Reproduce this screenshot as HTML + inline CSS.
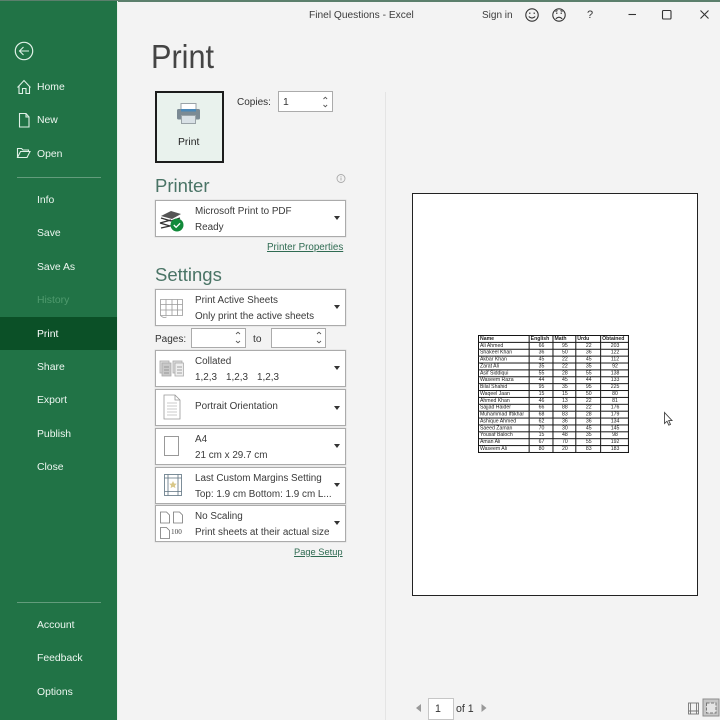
<!DOCTYPE html>
<html><head><meta charset="utf-8"><title>Print</title>
<style>
html,body{margin:0;padding:0;width:720px;height:720px;overflow:hidden;background:#f3f3f3}
body{position:relative;font-family:"Liberation Sans",sans-serif;color:#333}
.a{position:absolute;white-space:nowrap}
.nav{position:absolute;left:37px;font-size:10.4px;color:#eef7f1;white-space:nowrap;line-height:14px}
.box{position:absolute;left:155px;width:188.5px;background:#fff;border:1px solid #ababab;box-shadow:0 0 0 .5px #ddd}
.l1,.l2{position:absolute;left:39px;font-size:9.9px;color:#3a3a3a;white-space:nowrap;line-height:13px}
.arr{position:absolute;left:178px;width:0;height:0;border-left:3.5px solid transparent;border-right:3.5px solid transparent;border-top:4px solid #333}
.h{position:absolute;left:155px;font-size:18.5px;color:#4a7466;line-height:22px}
.lnk{position:absolute;color:#2f6b52;text-decoration:underline;white-space:nowrap;line-height:13px}
svg{position:absolute;overflow:visible}
table{position:absolute;left:478px;top:335px;width:151px;height:118px;border-collapse:collapse;table-layout:fixed;font-size:5.2px;color:#222;background:#fff;transform:scale(.993,.983);transform-origin:0 0}
td{border:1px solid #111;padding:0 0 0 1px;line-height:5px;height:6px;text-align:center;overflow:hidden;white-space:nowrap}
td:first-child{text-align:left}
tr:first-child td{font-weight:bold;text-align:left}
</style></head><body>
<div class="a" style="left:0;top:0;width:720px;height:2px;background:#5b7f6c"></div>
<div class="a" style="left:0;top:1px;width:117px;height:719px;background:#217346"></div>
<div class="a" style="left:0;top:317px;width:117px;height:33px;background:#0b5027"></div>
<div class="a" style="left:117px;top:1px;width:1px;height:719px;background:#e8eeea"></div>

<svg style="left:0;top:0" width="117" height="180" fill="none" stroke="#dff0e6" stroke-width="1.1">
<circle cx="24" cy="51" r="8.7" stroke-width="1.2"/>
<path d="M29 51H19.5M23.5 47l-4 4 4 4"/>
<path d="M17.500 87.500l6.500-7 6.500 7M19 86v7.500h3.500v-5h3.500v5h3.500v-7.500"/>
<path d="M19.500 113.500h6.500l3 3.500v10h-9.500zM26 113.500v3.500h3"/>
<path d="M17.500 157.500v-9h4l1.500 1.500h5.500v2M17.500 157.500l3-6h9.500l-3 6z"/>
</svg>
<div class="a" style="left:17px;top:176.500px;width:84px;height:1px;background:#639c7c"></div>
<div class="a" style="left:17px;top:601.500px;width:84px;height:1px;background:#639c7c"></div>
<div class="nav" style="top:80.500px">Home</div>
<div class="nav" style="top:113.500px">New</div>
<div class="nav" style="top:147.500px">Open</div>
<div class="nav" style="top:194px">Info</div>
<div class="nav" style="top:227px">Save</div>
<div class="nav" style="top:261px">Save As</div>
<div class="nav" style="top:294px;color:#4f9a6e">History</div>
<div class="nav" style="top:327.500px;color:#fff">Print</div>
<div class="nav" style="top:361px">Share</div>
<div class="nav" style="top:394px">Export</div>
<div class="nav" style="top:428px">Publish</div>
<div class="nav" style="top:461px">Close</div>
<div class="nav" style="top:619px">Account</div>
<div class="nav" style="top:652px">Feedback</div>
<div class="nav" style="top:686px">Options</div>

<div class="a" style="left:309px;top:9px;font-size:10.2px;color:#3c3c3c;line-height:13px">Finel Questions - Excel</div>
<div class="a" style="left:482px;top:9px;font-size:10px;color:#3c3c3c;line-height:13px">Sign in</div>
<svg style="left:0;top:0" width="720" height="30" fill="none" stroke="#333" stroke-width="1.100">
<circle cx="532" cy="15" r="6.200"/><path d="M528.800 16.500q3.200 3.200 6.400 0"/><path d="M529.800 12.500v1.500M534.200 12.500v1.500"/>
<circle cx="559" cy="15" r="6.200"/><path d="M555.800 18.800q3.200-3.200 6.400 0"/><path d="M556.800 12.500v1.500M561.200 12.500v1.500M555.500 11.500l2-1M562.500 11.500l-2-1"/>
<path d="M628.500 14.500h7.500"/>
<rect x="662.500" y="10.500" width="8.500" height="8.500" rx="1"/>
<path d="M700.500 10.500l8 8M708.500 10.500l-8 8"/>
</svg>
<div class="a" style="left:587px;top:8px;font-size:11px;color:#333;line-height:14px">?</div>

<div class="a" style="left:151px;top:38px;font-size:33.5px;color:#444;line-height:40px;transform:scaleX(.915);transform-origin:0 0">Print</div>

<div class="a" style="left:155px;top:91px;width:64.500px;height:68px;background:#e9f2ed;border:2px solid #1c1c1c"></div>
<svg style="left:0;top:0" width="240" height="130">
<rect x="181" y="103.500" width="15" height="8" fill="#fff" stroke="#9aa3a8"/>
<rect x="177" y="109" width="23" height="10.500" rx="1.500" fill="#7b8a94"/>
<rect x="181" y="109" width="15" height="2.500" fill="#4a88b8"/>
<rect x="181.500" y="115.500" width="14" height="8" fill="#d9e1e6" stroke="#9aa3a8"/>
</svg>
<div class="a" style="left:178px;top:136px;font-size:10.400px;color:#222;line-height:13px">Print</div>

<div class="a" style="left:237px;top:96px;font-size:10px;color:#333;line-height:13px">Copies:</div>
<div class="a" style="left:278px;top:91px;width:53px;height:18.500px;background:#fff;border:1px solid #ababab"></div>
<div class="a" style="left:283px;top:96px;font-size:10.400px;color:#333;line-height:13px">1</div>
<svg style="left:0;top:0" width="340" height="120" fill="none" stroke="#555" stroke-width=".9">
<path d="M323.500 99l1.800-1.800 1.800 1.800M323.500 105l1.800 1.800 1.800-1.800"/>
<circle cx="341" cy="178.500" r="4" stroke="#aaa"/><path d="M341 177.500v3M341 176v.8" stroke="#aaa"/>
</svg>

<div class="h" style="top:175px">Printer</div>
<div class="box" style="top:200px;height:35px">
<div class="l1" style="top:4px">Microsoft Print to PDF</div><div class="l2" style="top:20px">Ready</div><div class="arr" style="top:15px"></div>
<svg style="left:3px;top:8px" width="30" height="26">
<path d="M2 7l10-5 10 3-9 5z" fill="#555"/><path d="M2 9l10 3 9-3M1 14l11-3M1 14l10 3 4-1M2 19l9-2" stroke="#333" stroke-width="1.300" fill="none"/>
<circle cx="18" cy="16" r="6.500" fill="#128a3a"/><path d="M14.800 16l2.300 2.300 4-4" stroke="#fff" stroke-width="1.300" fill="none"/>
</svg>
</div>
<div class="lnk" style="left:267px;top:240.500px;font-size:9.800px">Printer Properties</div>

<div class="h" style="top:264px">Settings</div>
<div class="box" style="top:289px;height:35px">
<div class="l1" style="top:3.500px">Print Active Sheets</div><div class="l2" style="top:20px">Only print the active sheets</div><div class="arr" style="top:15px"></div>
<svg style="left:3px;top:8px" width="26" height="22" fill="#fff" stroke="#999" stroke-width=".8">
<path d="M1.500 1.500h22v16h-22zM1.500 6.500h22M1.500 12h22M7 1.500v16M13 1.500v16M18.500 1.500v16"/><path d="M1.500 17.500q3 3 6 1.500" fill="none"/>
</svg>
</div>
<div class="a" style="left:155px;top:332.500px;font-size:10px;color:#333;line-height:13px">Pages:</div>
<div class="a" style="left:191px;top:328px;width:53px;height:18px;background:#fff;border:1px solid #ababab"></div>
<div class="a" style="left:271px;top:328px;width:53px;height:18px;background:#fff;border:1px solid #ababab"></div>
<div class="a" style="left:253px;top:332.500px;font-size:10.200px;color:#333;line-height:13px">to</div>
<svg style="left:0;top:0" width="340" height="350" fill="none" stroke="#555" stroke-width=".9">
<path d="M236 334l2-1.800 2 1.800M236 341l2 1.800 2-1.800M317 334l2-1.800 2 1.800M317 341l2 1.800 2-1.800"/>
</svg>

<div class="box" style="top:350px;height:35px">
<div class="l1" style="top:4px">Collated</div><div class="l2" style="top:20px">1,2,3</div><div class="l2" style="top:20px;left:70px">1,2,3</div><div class="l2" style="top:20px;left:101px">1,2,3</div><div class="arr" style="top:15px"></div>
<svg style="left:3px;top:9px" width="26" height="20" fill="#ddd" stroke="#aaa" stroke-width=".8">
<rect x="1" y="1" width="9" height="12"/><rect x="3" y="3" width="9" height="13" fill="#c9c9c9"/><rect x="14" y="1" width="9" height="12"/><rect x="16" y="3" width="8.500" height="13" fill="#eee"/>
<path d="M5 7h5M5 10h5M5 13h5M18 7h5M18 10h5M18 13h5" stroke="#888"/>
</svg>
</div>
<div class="box" style="top:389px;height:35px">
<div class="l1" style="top:10px">Portrait Orientation</div><div class="arr" style="top:16px"></div>
<svg style="left:7px;top:4px" width="20" height="26" fill="#fff" stroke="#999" stroke-width=".8">
<path d="M1 1h11l5 5v19h-16zM12 1v5h5"/><path d="M4 9h10M4 12h10M4 15h10M4 18h10M4 21h10" stroke="#bbb"/>
</svg>
</div>
<div class="box" style="top:428px;height:35px">
<div class="l1" style="top:4px">A4</div><div class="l2" style="top:20px">21 cm x 29.7 cm</div><div class="arr" style="top:15px"></div>
<svg style="left:8px;top:7px" width="18" height="22"><rect x=".5" y=".5" width="14" height="19" fill="#fff" stroke="#999"/></svg>
</div>
<div class="box" style="top:466.500px;height:35px">
<div class="l1" style="top:4px">Last Custom Margins Setting</div><div class="l2" style="top:20px">Top: 1.9 cm Bottom: 1.9 cm L...</div><div class="arr" style="top:15px"></div>
<svg style="left:6px;top:6px" width="22" height="24" fill="none" stroke="#5d7280" stroke-width=".8">
<rect x="2.500" y=".5" width="17" height="21" fill="#fff"/><path d="M6 .5v21M16 .5v21M2.500 4h17M2.500 17.500h17"/>
<path d="M11 7l1.200 2.500 2.500.3-1.800 1.800.5 2.500-2.400-1.300-2.400 1.300.5-2.500-1.800-1.800 2.500-.3z" fill="#d9c88a" stroke="none"/>
</svg>
</div>
<div class="box" style="top:505px;height:35px">
<div class="l1" style="top:4px">No Scaling</div><div class="l2" style="top:20px">Print sheets at their actual size</div><div class="arr" style="top:15px"></div>
<svg style="left:3px;top:4px" width="30" height="30" fill="#fff" stroke="#777" stroke-width=".8">
<path d="M1.500 2h6l3 3v8h-9zM14.500 2h6l3 3v8h-9zM1.500 17.500h6l3 3v8h-9z"/>
</svg>
<div class="a" style="left:15px;top:22px;font-size:7.200px;color:#444;line-height:9px;font-family:'Liberation Serif',serif">100</div>
</div>
<div class="lnk" style="left:294px;top:545.500px;font-size:9.300px">Page Setup</div>

<div class="a" style="left:384.500px;top:92px;width:1px;height:628px;background:#e4e4e4"></div>
<div class="a" style="left:412px;top:192.500px;width:283.500px;height:401px;background:#fff;border:1px solid #222"></div>

<table>
<colgroup><col style="width:51px"><col style="width:24px"><col style="width:23px"><col style="width:25px"><col style="width:28px"></colgroup>
<tr><td>Name</td><td>English</td><td>Math</td><td>Urdu</td><td>Obtained</td></tr>
<tr><td>Ali Ahmed</td><td>66</td><td>95</td><td>22</td><td>203</td></tr>
<tr><td>Shakeel Khan</td><td>36</td><td>50</td><td>36</td><td>122</td></tr>
<tr><td>Akbar Khan</td><td>45</td><td>22</td><td>45</td><td>112</td></tr>
<tr><td>Zarat Ali</td><td>35</td><td>22</td><td>35</td><td>92</td></tr>
<tr><td>Asif Siddiqui</td><td>55</td><td>28</td><td>55</td><td>138</td></tr>
<tr><td>Waseem Raza</td><td>44</td><td>45</td><td>44</td><td>133</td></tr>
<tr><td>Bilal Shahid</td><td>95</td><td>35</td><td>95</td><td>225</td></tr>
<tr><td>Waqeel Jaan</td><td>15</td><td>15</td><td>50</td><td>80</td></tr>
<tr><td>Ahmed Khan</td><td>46</td><td>13</td><td>22</td><td>81</td></tr>
<tr><td>Sajjad Haider</td><td>66</td><td>88</td><td>22</td><td>176</td></tr>
<tr><td>Muhammad Iftikhar</td><td>68</td><td>83</td><td>28</td><td>179</td></tr>
<tr><td>Ashique Ahmed</td><td>62</td><td>36</td><td>36</td><td>134</td></tr>
<tr><td>Saeed Zaman</td><td>70</td><td>30</td><td>45</td><td>145</td></tr>
<tr><td>Yousaf Baloch</td><td>15</td><td>48</td><td>35</td><td>98</td></tr>
<tr><td>Aman Ali</td><td>67</td><td>70</td><td>55</td><td>192</td></tr>
<tr><td>Waseem Ali</td><td>80</td><td>20</td><td>83</td><td>183</td></tr>
</table>

<svg style="left:660px;top:410px" width="14" height="18"><path d="M4.500 2.500v11l2.500-2.300 1.800 4 1.700-.8-1.800-3.800h3.300z" fill="#fff" stroke="#444" stroke-width=".9"/></svg>

<svg style="left:0;top:0" width="720" height="720">
<path d="M416 708l5-4v8zM486.500 708l-5-4v8z" fill="#999"/>
<g fill="none" stroke="#777" stroke-width=".9"><rect x="688.500" y="703" width="10" height="11"/><path d="M690.500 703v11M696.500 703v11M688.500 711h10"/></g>
<rect x="703" y="699" width="16" height="17" fill="#c6c6c6" stroke="#8d8d8d"/>
<rect x="706.500" y="703" width="9.500" height="10" fill="#e4e4e4" stroke="#777" stroke-dasharray="3 1.500"/>
</svg>
<div class="a" style="left:428px;top:698px;width:24px;height:20px;background:#fff;border:1px solid #c6c6c6"></div>
<div class="a" style="left:435px;top:703px;font-size:10.600px;color:#333;line-height:13px">1</div>
<div class="a" style="left:456px;top:703px;font-size:10.600px;color:#333;line-height:13px">of 1</div>
</body></html>
